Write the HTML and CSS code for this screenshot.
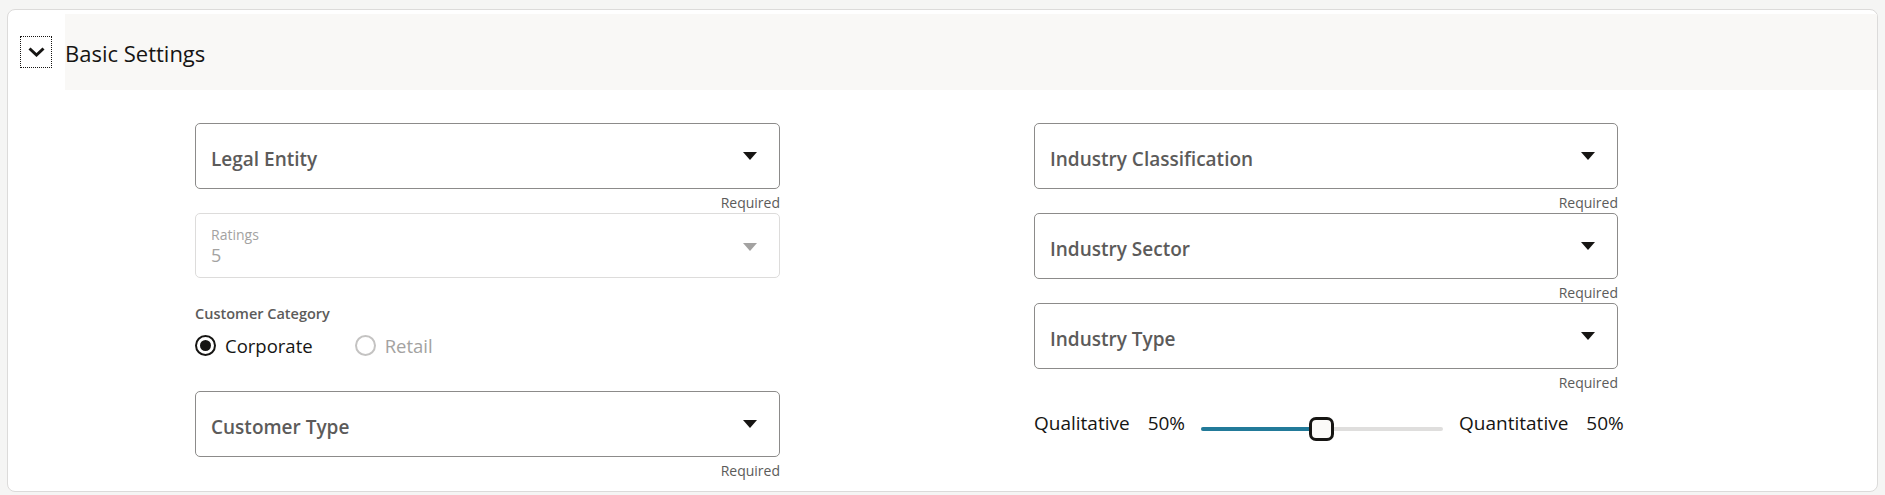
FILE: index.html
```html
<!DOCTYPE html>
<html lang="en">

<head>
  <meta charset="UTF-8">
  <meta name="viewport" content="width=device-width, initial-scale=1.0">
  <title>Basic Settings</title>
  <link rel="stylesheet" href="styles.css">
</head>

<body>
  <section class="card">
    <div class="card-head">
      <button class="toggle" aria-label="Collapse">
        <svg width="17" height="10" viewBox="0 0 17 10">
          <polyline points="1.5,1.5 8.5,8 15.5,1.5" fill="none" stroke="#161513" stroke-width="3" />
        </svg>
      </button>
      <div class="head-band">
        <span class="head-title">Basic Settings</span>
      </div>
    </div>

    <div class="card-body">
      <div class="col">
        <div class="field">
          <div class="select">
            <span class="select-label">Legal Entity</span>
            <span class="caret"></span>
          </div>
          <div class="hint">Required</div>
        </div>

        <div class="field">
          <div class="select select-disabled">
            <div class="select-value">
              <span class="mini-label">Ratings</span>
              <span class="value">5</span>
            </div>
            <span class="caret"></span>
          </div>
        </div>

        <div class="radio-set">
          <div class="radio-title">Customer Category</div>
          <div class="radio-row">
            <label class="radio">
              <span class="radio-dot checked"></span>
              <span>Corporate</span>
            </label>
            <label class="radio radio-disabled">
              <span class="radio-dot"></span>
              <span>Retail</span>
            </label>
          </div>
        </div>

        <div class="field">
          <div class="select">
            <span class="select-label">Customer Type</span>
            <span class="caret"></span>
          </div>
          <div class="hint">Required</div>
        </div>
      </div>

      <div class="col">
        <div class="field">
          <div class="select">
            <span class="select-label">Industry Classification</span>
            <span class="caret"></span>
          </div>
          <div class="hint">Required</div>
        </div>

        <div class="field">
          <div class="select">
            <span class="select-label">Industry Sector</span>
            <span class="caret"></span>
          </div>
          <div class="hint">Required</div>
        </div>

        <div class="field">
          <div class="select">
            <span class="select-label">Industry Type</span>
            <span class="caret"></span>
          </div>
          <div class="hint">Required</div>
        </div>

        <div class="weight-row">
          <span class="weight-name">Qualitative</span>
          <span class="weight-value">50%</span>
          <div class="slider">
            <div class="slider-fill" style="width: 50%"></div>
            <div class="slider-thumb" style="left: 50%"></div>
          </div>
          <span class="weight-name">Quantitative</span>
          <span class="weight-value">50%</span>
        </div>
      </div>
    </div>
  </section>
</body>

</html>
```

FILE: styles.css
```css
body {
  margin: 0;
  background-color: #f5f5f4;
  color: #161513;
  font-family: "Open Sans", "Noto Sans", sans-serif;
}

.card {
  margin: 9px 7px 3px 7px;
  height: 483px;
  box-sizing: border-box;
  background-color: #fff;
  border: 1px solid #dcdbda;
  border-radius: 8px;
}

.card-head {
  display: flex;
  align-items: center;
  padding-top: 4px;
}

.toggle {
  display: flex;
  align-items: center;
  justify-content: center;
  width: 32px;
  height: 32px;
  margin: 0 13px 0 12px;
  padding: 0;
  background: none;
  border: 1px dotted #161513;
  cursor: pointer;
}

.head-band {
  flex: 1;
  display: flex;
  align-items: center;
  height: 76px;
  background-color: #f9f8f6;
}

.head-title {
  font-size: 22px;
  line-height: 30px;
  margin-top: 2px;
}

.card-body {
  display: grid;
  grid-template-columns: 585px 584px;
  column-gap: 254px;
  padding: 33px 0 0 187px;
}

.col {
  display: flex;
  flex-direction: column;
}

.select {
  display: flex;
  align-items: center;
  justify-content: space-between;
  height: 66px;
  box-sizing: border-box;
  padding: 0 22px 0 15px;
  border: 1px solid #8c8b8a;
  border-radius: 5px;
}

.select-label {
  padding-top: 6px;
  font-size: 19px;
  font-weight: 600;
  color: #5c5b5a;
}

.caret {
  width: 0;
  height: 0;
  border-left: 7.5px solid transparent;
  border-right: 7.5px solid transparent;
  border-top: 8px solid #161513;
}

.select-disabled {
  height: 65px;
  border-color: #dddcdb;
}

.select-disabled .caret {
  border-top-color: #a3a2a1;
  margin-top: 2px;
}

.select-value {
  display: flex;
  flex-direction: column;
  color: #a3a2a1;
}

.mini-label {
  font-size: 14px;
  line-height: 19px;
}

.value {
  font-size: 18px;
  line-height: 22px;
}

.hint {
  height: 24px;
  font-size: 14px;
  line-height: 28px;
  text-align: right;
  color: #5c5b5a;
}

.radio-set {
  margin-top: 26px;
}

.radio-title {
  font-size: 14.5px;
  font-weight: 600;
  line-height: 20px;
  color: #5c5b5a;
}

.radio-row {
  display: flex;
  align-items: center;
  gap: 42px;
  height: 30px;
  margin-top: 6px;
  margin-bottom: 31px;
}

.radio {
  display: flex;
  align-items: center;
  gap: 9px;
  font-size: 18.5px;
}

.radio-dot {
  display: flex;
  align-items: center;
  justify-content: center;
  width: 21px;
  height: 21px;
  box-sizing: border-box;
  border: 2px solid #161513;
  border-radius: 50%;
}

.radio-dot.checked::after {
  content: "";
  width: 11px;
  height: 11px;
  border-radius: 50%;
  background-color: #161513;
}

.radio-disabled {
  color: #a3a2a1;
}

.radio-disabled .radio-dot {
  border-color: #c4c3c2;
}

.weight-row {
  display: flex;
  align-items: center;
  height: 30px;
  margin-top: 15px;
  font-size: 19px;
  white-space: nowrap;
}

.weight-row > * {
  flex-shrink: 0;
}

.weight-name {
  margin-right: 18px;
}

.weight-value {
  margin-right: 16px;
}

.slider {
  position: relative;
  width: 242px;
  height: 4px;
  margin: 12px 16px 0 0;
  background-color: #dfdedd;
  border-radius: 2px;
}

.slider-fill {
  height: 100%;
  background-color: #227a99;
  border-radius: 2px;
}

.slider-thumb {
  position: absolute;
  top: -10px;
  width: 25px;
  height: 24px;
  margin-left: -13px;
  box-sizing: border-box;
  background-color: #fbfaf8;
  border: 3px solid #161513;
  border-radius: 7px;
}
```
